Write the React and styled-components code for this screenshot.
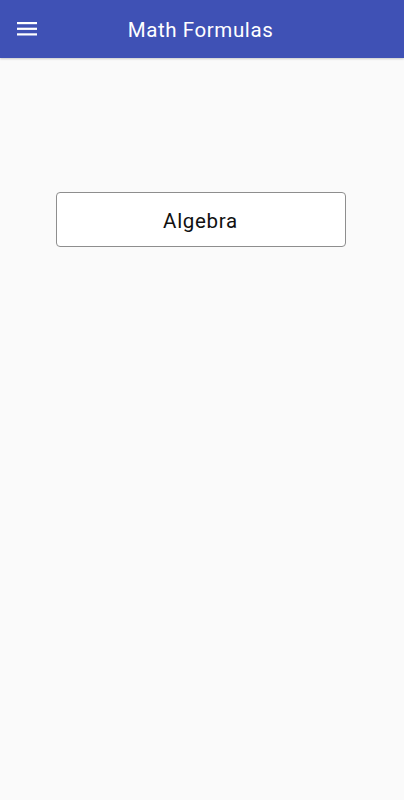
import React from "react";
import styled, { createGlobalStyle } from "styled-components";

const GlobalStyle = createGlobalStyle`
  html, body { margin: 0; padding: 0; background: #fafafa; }
  body { font-family: Roboto, "Noto Sans", sans-serif; }
  * { box-sizing: border-box; }
`;

const Page = styled.div`
  width: 404px;
  min-height: 800px;
  background: #fafafa;
  display: flex;
  flex-direction: column;
`;

const AppBar = styled.header`
  height: 58px;
  background: #3f51b5;
  display: grid;
  grid-template-columns: 56px 1fr 59px;
  align-items: center;
  box-shadow: 0 1px 2px rgba(0, 0, 0, 0.2);
`;

const MenuButton = styled.button`
  width: 56px;
  height: 58px;
  border: 0;
  background: transparent;
  padding: 0 0 0 17px;
  display: flex;
  align-items: center;
  color: #fff;
`;

const Title = styled.h1`
  margin: 0;
  text-align: center;
  color: #fff;
  font-family: Roboto, sans-serif;
  font-weight: 400;
  font-size: 20.5px;
  letter-spacing: 0.6px;
  line-height: 1;
  padding-top: 3px;
`;

const Content = styled.main`
  display: flex;
  flex-direction: column;
  align-items: center;
  padding: 134px 59px 0 56px;
`;

const TopicButton = styled.button`
  width: 290px;
  height: 55px;
  background: #fff;
  border: 1px solid #8e8e8e;
  border-radius: 4px;
  font-family: Roboto, sans-serif;
  font-size: 20.5px;
  letter-spacing: 0.7px;
  color: #111;
  display: flex;
  align-items: center;
  justify-content: center;
  padding: 2px 0 0;
`;

function MenuIcon() {
  return (
    <svg width="20" height="14" viewBox="0 0 20 14">
      <rect x="0" y="0" width="20" height="2.2" fill="#fff" />
      <rect x="0" y="5.7" width="20" height="2.2" fill="#fff" />
      <rect x="0" y="11.3" width="20" height="2.2" fill="#fff" />
    </svg>
  );
}

export default function App() {
  return (
    <>
      <GlobalStyle />
      <Page>
        <AppBar>
          <MenuButton aria-label="menu">
            <MenuIcon />
          </MenuButton>
          <Title>Math Formulas</Title>
          <span />
        </AppBar>
        <Content>
          <TopicButton>Algebra</TopicButton>
        </Content>
      </Page>
    </>
  );
}
